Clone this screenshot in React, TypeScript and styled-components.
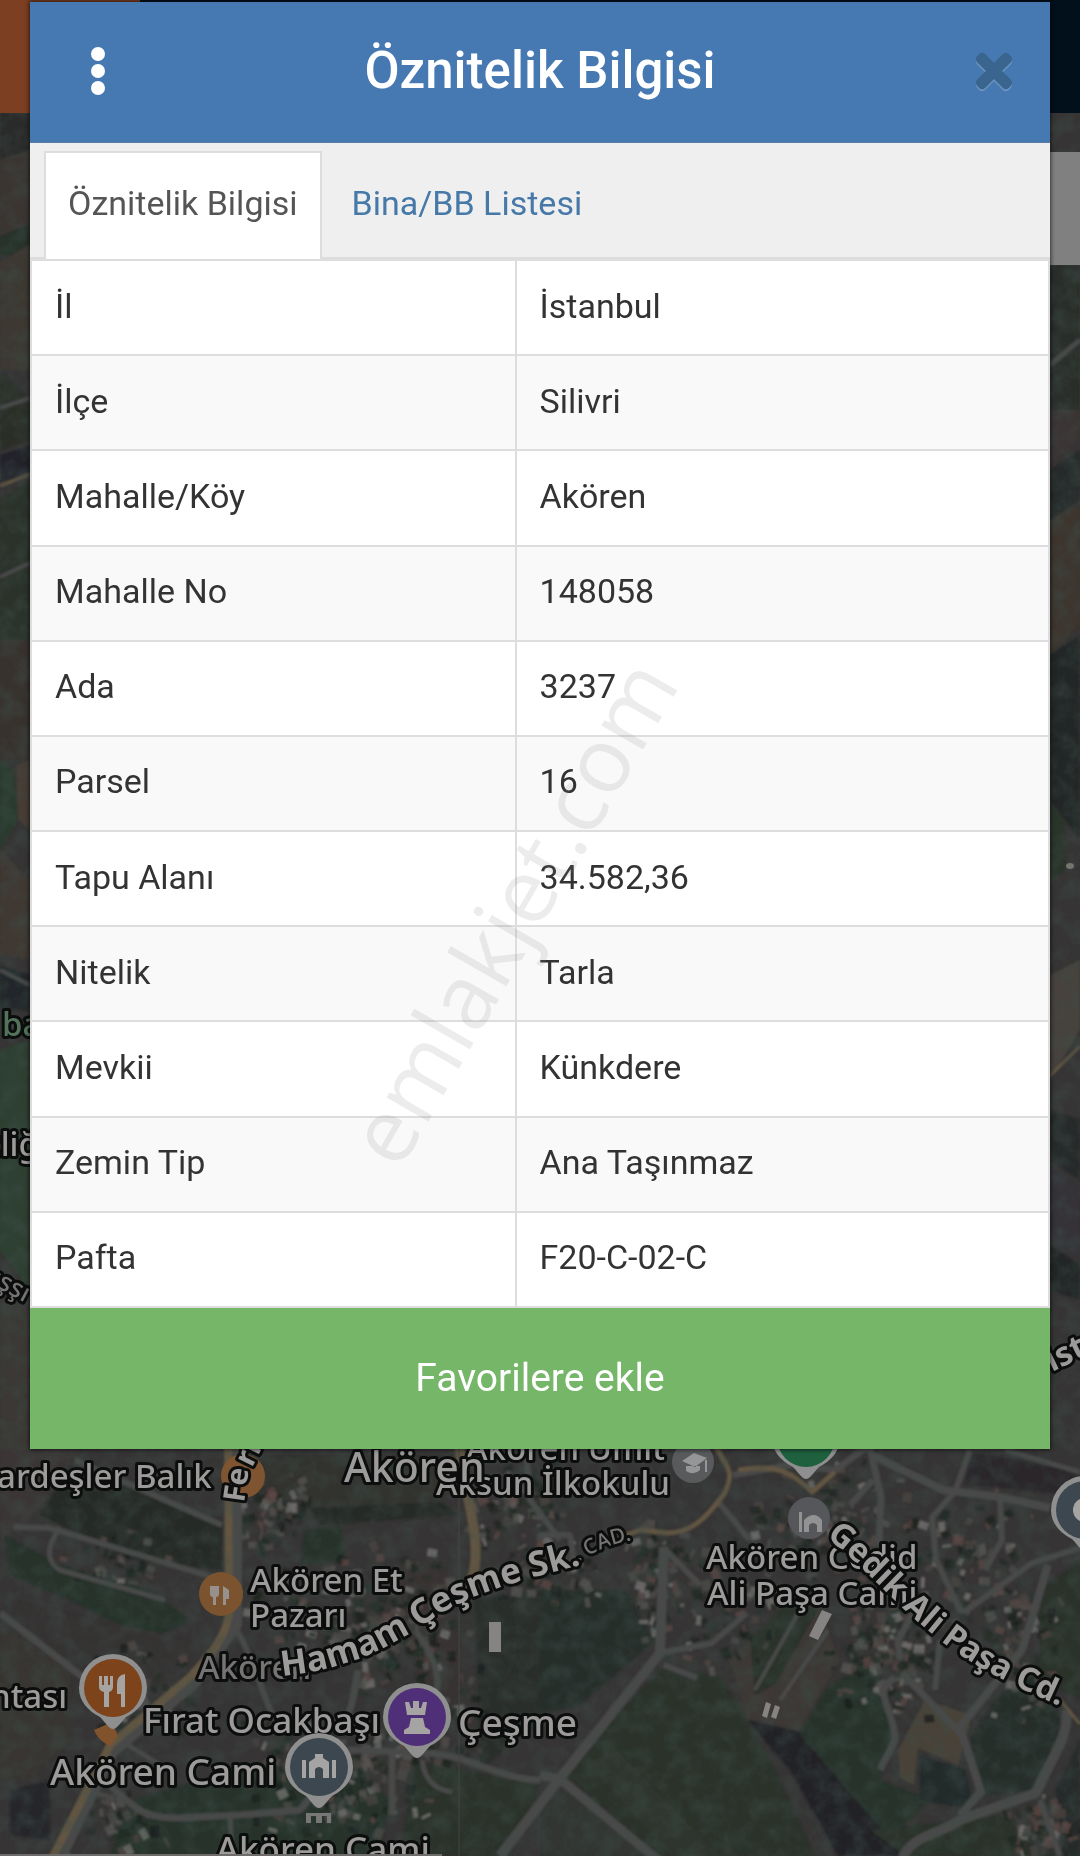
import React from "react";
import styled, { createGlobalStyle, css } from "styled-components";
import { FaTimes } from "react-icons/fa";

const GlobalStyle = createGlobalStyle`
  *, *::before, *::after { box-sizing: border-box; }
  body {
    margin: 0;
    background: #33312f;
    font-family: Roboto, "Noto Sans", sans-serif;
    color: #333;
  }
`;

const Page = styled.div`
  position: relative;
  min-height: 100vh;
  padding: 2px 30px 0;
  overflow: hidden;
`;

const Backdrop = styled.div`
  position: absolute;
  inset: 0;
  overflow: hidden;
  svg {
    display: block;
    width: 100%;
    height: 100%;
  }
`;

const Modal = styled.section`
  position: relative;
  display: flex;
  flex-direction: column;
  background: #fff;
  box-shadow: 0 0 4px 1px rgba(0, 0, 0, 0.6);
`;

const Header = styled.header`
  display: grid;
  grid-template-columns: 136px 1fr 136px;
  align-items: center;
  height: 141px;
  padding-bottom: 2px;
  background: #4678b2;
  border-bottom: 1px solid #5a7ba3;
`;

const IconButton = styled.button<{ $align: "start" | "end" }>`
  display: flex;
  justify-content: ${(p) => (p.$align === "start" ? "flex-start" : "flex-end")};
  align-items: center;
  height: 100%;
  padding: 0 39px;
  border: 0;
  background: none;
  color: #3a658f;
  cursor: pointer;
  ${(p) => p.$align === "start" && css`padding-left: 61px;`}
  svg { flex: none; }
`;

const CloseIcon = styled(FaTimes)`
  width: 34px;
  height: 50px;
  overflow: visible;
  stroke: currentColor;
  stroke-width: 24px;
  stroke-linejoin: round;
  filter: drop-shadow(0 2px 0 #6b93c0);
`;

const Title = styled.h1`
  margin: 0;
  text-align: center;
  font-size: 51px;
  line-height: 60px;
  font-weight: 500;
  color: #fff;
`;

const TabList = styled.div`
  display: flex;
  align-items: stretch;
  gap: 6px;
  height: 116px;
  padding: 8px 14px 0;
  background: #efefef;
  border-bottom: 2px solid #ddd;
`;

const Tab = styled.button<{ $active?: boolean }>`
  margin-bottom: -2px;
  padding: 0 22px 6px;
  border: 2px solid ${(p) => (p.$active ? "#ddd" : "transparent")};
  border-bottom: 0;
  background: ${(p) => (p.$active ? "#fff" : "transparent")};
  color: ${(p) => (p.$active ? "#555" : "#4678a8")};
  font: 400 34px/40px Roboto, "Noto Sans", sans-serif;
  cursor: pointer;
`;

const Table = styled.table`
  width: 100%;
  height: 1049px;
  border-collapse: collapse;
  table-layout: fixed;
  font-size: 34px;
  line-height: 40px;

  col:first-child { width: 47.6%; }
  th, td {
    padding: 22px 23px 26px;
    border: 2px solid #ddd;
    text-align: left;
    font-weight: 400;
  }
  tr:nth-child(even) { background: #f9f9f9; }
`;

const FavoriteButton = styled.button`
  height: 141px;
  padding: 0 0 2px;
  border: 0;
  background: #75b668;
  color: #fff;
  font: 400 39px/48px Roboto, "Noto Sans", sans-serif;
  cursor: pointer;
`;

const Watermark = styled.div`
  position: absolute;
  top: 50%;
  left: 50%;
  padding-bottom: 70px;
  transform: translate(-50%, -50%) rotate(-60deg);
  font: 400 90px/100px "Open Sans", "Noto Sans", sans-serif;
  color: rgba(125, 125, 125, 0.15);
  white-space: nowrap;
  pointer-events: none;
`;

const rows: [string, string][] = [
  ["İl", "İstanbul"],
  ["İlçe", "Silivri"],
  ["Mahalle/Köy", "Akören"],
  ["Mahalle No", "148058"],
  ["Ada", "3237"],
  ["Parsel", "16"],
  ["Tapu Alanı", "34.582,36"],
  ["Nitelik", "Tarla"],
  ["Mevkii", "Künkdere"],
  ["Zemin Tip", "Ana Taşınmaz"],
  ["Pafta", "F20-C-02-C"],
];

/* Land parcels: fill colour and outline. */
const parcels: [string, string][] = [
  ["#2b2c29", "0,113 30,113 30,155 0,160"],
  ["#3b3633", "0,160 30,150 30,228 0,236"],
  ["#26302a", "0,236 30,224 30,254 0,256"],
  ["#3e3833", "0,262 30,244 30,370 0,370"],
  ["#2b2d28", "0,370 30,400 30,440 0,450"],
  ["#22242a", "0,455 30,445 30,475 0,482"],
  ["#293029", "0,500 30,480 30,640 0,640"],
  ["#38332f", "0,640 30,640 30,760 0,760"],
  ["#2c3b2d", "0,760 14,770 18,820 0,850"],
  ["#463c36", "16,765 30,760 30,830 18,820"],
  ["#3f3832", "0,850 30,880 30,960 0,955"],
  ["#24262a", "0,965 30,975 30,1010 0,1010"],
  ["#2e3f31", "0,1050 30,1040 30,1290 0,1250"],
  ["#3b3835", "0,1290 30,1310 30,1449 0,1449"],
  ["#2b2f2a", "1050,265 1080,265 1080,410 1050,410"],
  ["#3b3534", "1050,410 1080,410 1080,440 1050,466"],
  ["#25292a", "1050,470 1080,450 1080,500 1050,520"],
  ["#3d352e", "1050,520 1080,505 1080,625 1050,655"],
  ["#232827", "1050,655 1080,635 1080,840 1050,800"],
  ["#2a342c", "1050,800 1064,820 1066,870 1050,880"],
  ["#47423d", "1050,975 1080,960 1080,1030 1050,1080"],
  ["#25292a", "1050,1110 1080,1120 1080,1180 1050,1160"],
  ["#363238", "1050,1165 1080,1190 1080,1260 1050,1240"],
  ["#232626", "1050,1245 1080,1265 1080,1300 1050,1290"],
  ["#3a3635", "0,1449 80,1449 30,1520 0,1540"],
  ["#272c28", "70,1465 222,1520 222,1570 130,1560 40,1515"],
  ["#26322a", "5,1535 60,1565 150,1590 190,1620 150,1640 70,1600 10,1575"],
  ["#343130", "10,1600 190,1640 170,1680 90,1700 20,1650"],
  ["#383433", "0,1625 70,1670 72,1740 30,1780 0,1780"],
  ["#33312f", "236,1455 455,1455 440,1500 330,1515 240,1490"],
  ["#25302a", "305,1530 340,1525 345,1560 300,1565"],
  ["#282b27", "310,1508 440,1502 460,1515 320,1525"],
  ["#373331", "395,1565 450,1570 465,1700 420,1690"],
  ["#263029", "240,1770 340,1760 390,1800 380,1856 110,1856 130,1800"],
  ["#25262a", "10,1790 50,1780 50,1840 10,1835"],
  ["#293029", "415,1760 540,1785 510,1856 400,1856"],
  ["#272f2a", "540,1590 625,1590 655,1640 580,1705 540,1715"],
  ["#292e29", "475,1600 540,1590 540,1720 480,1770"],
  ["#293029", "660,1670 720,1675 770,1760 815,1856 660,1856 565,1775 620,1710"],
  ["#323430", "565,1785 650,1856 540,1856 540,1810"],
  ["#2e342d", "612,1745 720,1856 670,1856 590,1765"],
  ["#232327", "747,1720 800,1732 905,1856 838,1856 790,1770"],
  ["#3d3935", "820,1610 840,1660 798,1730 747,1718 730,1660 770,1620"],
  ["#293029", "750,1640 790,1600 818,1610 775,1685 755,1695"],
  ["#28302a", "825,1690 870,1660 895,1730 880,1780 930,1800 890,1840 800,1735"],
  ["#4a4239", "925,1700 972,1715 958,1765 918,1748 914,1785 900,1778 898,1750"],
  ["#242a29", "920,1755 965,1770 975,1810 920,1800"],
  ["#282f2a", "995,1700 1050,1650 1062,1735 1035,1790 985,1795 970,1740"],
  ["#2a282c", "970,1452 1080,1470 1080,1495 965,1485"],
  ["#293029", "1040,1590 1080,1560 1080,1700 1040,1680"],
  ["#282c2b", "1055,1790 1080,1740 1080,1856 1065,1856"],
  ["#293029", "870,1830 1010,1815 1035,1856 905,1856"],
];

const greyRoads: [number, string][] = [
  [7, "M0 1613 L80 1675 L110 1690"],
  [6, "M14 1527 L50 1528 L222 1580"],
  [5, "M60 1527 C48 1545 44 1560 60 1570 L165 1600"],
  [6, "M75 1460 L165 1500 L222 1525"],
  [6, "M235 1627 C255 1660 260 1690 275 1720"],
  [6, "M415 1630 C430 1650 440 1670 437 1690"],
  [7, "M358 1670 C355 1690 352 1710 345 1720 M392 1750 L392 1815"],
  [7, "M110 1785 C140 1815 150 1818 180 1818 L240 1815 L300 1810 L350 1750 L427 1753 C470 1755 500 1780 540 1780"],
  [5, "M422 1760 C425 1785 440 1790 452 1792 M230 1815 L232 1856 M120 1740 L160 1765"],
  [10, "M500 1856 L561 1777 L609 1717 L660 1653 L664 1547"],
  [9, "M561 1780 L660 1862 M540 1775 L565 1780"],
  [6, "M660 1653 L712 1643 L747 1613 M664 1665 L697 1678 M664 1548 L700 1585"],
  [6, "M525 1440 L530 1500 L560 1540 M540 1535 L570 1535 L575 1570"],
  [6, "M716 1500 C735 1520 740 1530 750 1540"],
  [7, "M733 1475 L790 1465 L835 1470 L870 1445"],
  [7, "M870 1448 L881 1497 L879 1545 M873 1480 L850 1505"],
  [8, "M872 1455 L943 1490 L1000 1497 L1050 1508"],
  [6, "M970 1450 L955 1492 L932 1517 L936 1560 L960 1610 L970 1612"],
  [6, "M1000 1497 L1002 1540 L985 1570 M1080 1548 L1032 1563 L967 1610"],
  [5, "M1005 1450 L1080 1472"],
  [8, "M1048 1565 L1022 1650 L960 1727 L981 1792 L960 1815"],
  [7, "M902 1673 L960 1733 M900 1660 L898 1640 L915 1610"],
  [7, "M895 1678 C870 1690 895 1710 895 1740 L880 1770"],
  [10, "M902 1860 C910 1835 940 1835 960 1820 L1036 1793 C1050 1760 1068 1740 1067 1710"],
  [6, "M1040 1800 L1060 1856 M940 1640 L935 1690"],
  [4, "M755 1690 L800 1610 M780 1700 L828 1630"],
  [4, "M0 408 L30 398 M0 577 L30 563 M0 970 L30 985"],
  [5, "M1050 365 L1080 340"],
];

const tanRoads: [number, string][] = [
  [8, "M228 1445 L229 1610 C228 1640 200 1665 190 1677 L110 1745 L50 1862"],
  [10, "M459 1445 C466 1500 482 1540 473 1575 L460 1600"],
  [5, "M716 1445 C722 1465 738 1468 724 1494 C705 1520 690 1533 667 1533 L640 1530 L600 1545"],
  [5, "M738 1470 C780 1463 795 1475 812 1492 L835 1472"],
  [3, "M1060 1700 L1080 1724"],
  [3, "M1050 1076 L1080 1046 M0 486 L30 474"],
];

/* Neighbourhoods: centre x, y, spread x, y and number of roofs. */
const clusters: [number, number, number, number, number][] = [
  [360, 1620, 130, 80, 230],
  [330, 1770, 100, 70, 230],
  [270, 1510, 40, 45, 60],
  [440, 1720, 60, 70, 70],
  [510, 1500, 60, 50, 80],
  [540, 1570, 70, 40, 50],
  [650, 1580, 30, 70, 70],
  [720, 1600, 70, 80, 80],
  [880, 1650, 60, 70, 150],
  [820, 1520, 90, 70, 110],
  [960, 1560, 80, 80, 100],
  [1020, 1640, 40, 90, 80],
  [1040, 1830, 40, 40, 80],
  [140, 1690, 60, 50, 50],
  [110, 1820, 60, 40, 50],
  [120, 1560, 70, 35, 30],
];

function buildRoofs() {
  let seed = 71;
  const next = () => {
    seed = (seed * 16807) % 2147483647;
    return seed / 2147483647;
  };
  const tones = ["#5a5654", "#5d4744", "#1b201d", "#1e2720", "#504c4a", "#222a24", "#7c7a78", "#4e4340", "#1c221d", "#2a332b"];
  return clusters.flatMap(([cx, cy, sx, sy, count]) =>
    Array.from({ length: count }, () => ({
      x: Math.round(cx + (next() + next() - 1) * sx),
      y: Math.round(cy + (next() + next() - 1) * sy),
      w: Math.round(3 + next() * 8),
      h: Math.round(3 + next() * 8),
      a: Math.round(next() * 60 - 30),
      fill: tones[Math.floor(next() * tones.length)],
    }))
  );
}

const roofs = buildRoofs();

const MapLabel = styled.text<{ $size?: number; $dim?: boolean; $strong?: boolean; $park?: boolean }>`
  font-family: "Noto Sans", Roboto, sans-serif;
  font-size: ${(p) => p.$size ?? 33}px;
  font-weight: ${(p) => (p.$strong ? 700 : 500)};
  fill: ${(p) => (p.$park ? "#55735b" : p.$dim ? "#767473" : "#9c9b9a")};
  stroke: #0c0d0d;
  stroke-width: 6px;
  stroke-linejoin: round;
  paint-order: stroke;
`;

function Pin({ x, y, color, children }: { x: number; y: number; color: string; children?: React.ReactNode }) {
  return (
    <g transform={`translate(${x} ${y})`}>
      <path d="M0 41 C-4 41 -7 35 -13 29 C-25 23 -34 13 -34 0 A34 34 0 0 1 34 0 C34 13 25 23 13 29 C7 35 4 41 0 41 Z" fill="#8f8f8f" />
      <circle r="29" fill={color} />
      <g fill="#a5a4a3">{children}</g>
    </g>
  );
}

function SatelliteMap() {
  return (
    <svg viewBox="0 0 1080 1856" preserveAspectRatio="xMidYMin slice" aria-hidden="true">
      <defs>
        <filter id="soft" x="0" y="0" width="100%" height="100%">
          <feGaussianBlur stdDeviation="1.2" />
        </filter>
        <filter id="terrain" x="0" y="0" width="100%" height="100%">
          <feTurbulence type="fractalNoise" baseFrequency="0.06" numOctaves="4" seed="8" />
          <feColorMatrix values="0 0 0 0 0.05  0 0 0 0 0.08  0 0 0 0 0.07  1.8 0 0 0 -0.65" />
        </filter>
        <path id="hamam" d="M282 1676 C360 1668 400 1640 440 1614 C480 1590 530 1578 600 1560" />
        <path id="gedik" d="M826 1537 C860 1562 900 1610 940 1640 C980 1672 1020 1688 1090 1720" />
        <path id="cad" d="M578 1562 C600 1548 620 1540 650 1538" />
      </defs>
      <rect width="1080" height="1856" fill="#363434" />
      <g filter="url(#soft)">
        {parcels.map(([fill, points]) => (
          <polygon key={points} points={points} fill={fill} />
        ))}
        {roofs.map((r, i) => (
          <rect key={i} x={r.x} y={r.y} width={r.w} height={r.h} fill={r.fill} opacity="0.75" transform={`rotate(${r.a} ${r.x} ${r.y})`} />
        ))}
        <g fill="none" stroke="#4a4948" strokeLinejoin="round">
          <path d="M236 1445 L236 1625 L195 1682 L112 1752 L58 1862" strokeWidth="12" />
          {greyRoads.map(([w, d]) => (
            <path key={d} d={d} strokeWidth={w} />
          ))}
        </g>
        <g fill="none" stroke="#635743" strokeLinejoin="round">
          {tanRoads.map(([w, d]) => (
            <path key={d} d={d} strokeWidth={w} />
          ))}
        </g>
      </g>
      <rect width="1080" height="1856" filter="url(#terrain)" opacity="0.5" />
      <path d="M459 1449 V1856" stroke="#444" strokeWidth="1" />
      <g fill="#858483">
        <path d="M489 1622 h12 v30 h-12 z" />
        <path d="M822 1610 l10 4 -14 26 -9 -4 z" />
        <path d="M766 1702 l5 2 -4 14 -5 -2 z M775 1705 l5 2 -4 12 -5 -2 z" />
      </g>
      <ellipse cx="1070" cy="866" rx="4" ry="3" fill="#74746f" />

      <rect width="140" height="113" fill="#7c3f22" />
      <rect x="140" width="940" height="113" fill="#02101c" />
      <rect x="1040" y="152" width="40" height="113" fill="#808080" />

      <circle cx="243" cy="1476" r="22" fill="#7f5430" />
      <circle cx="221" cy="1594" r="22" fill="#7b532f" />
      <path d="M210 1586 v8 q0 3 3 3 v8 h3 v-8 q3 0 3 -3 v-8 z M223 1586 v19 h3 v-6 h3 v-9 z" fill="#96918c" />
      <path d="M94 1730 C98 1740 106 1744 110 1746 L118 1736 L112 1722 Z" fill="#80532d" />
      <circle cx="693" cy="1462" r="21" fill="#595a5c" />
      <path d="M682 1461 l12 -8 13 5 -12 9 z M686 1466 v5 q8 5 14 -1 v-4 z M705 1460 h2 v12 h-2 z" fill="#959697" />
      <circle cx="809" cy="1518" r="21" fill="#55575a" />
      <path d="M799 1512 h3 v20 h-3 z M804 1532 v-12 q10 -10 18 0 v12 h-5 v-7 q-4 -4 -8 0 v7 z" fill="#929292" />

      <MapLabel x="-3" y="1488">ardeşler Balık</MapLabel>
      <MapLabel transform="translate(244 1503) rotate(-82)" $strong $size={30}>Fe</MapLabel>
      <MapLabel transform="translate(252 1468) rotate(-64)" $strong $size={30}>rman</MapLabel>
      <MapLabel x="436" y="1495">Aksun İlkokulu</MapLabel>
      <MapLabel x="466" y="1460">Akören Ümit</MapLabel>
      <MapLabel x="344" y="1482" $size={41}>Akören</MapLabel>
      <MapLabel x="250" y="1592">Akören Et</MapLabel>
      <MapLabel x="250" y="1627">Pazarı</MapLabel>
      <MapLabel x="198" y="1679" $dim>Akören</MapLabel>
      <MapLabel x="706" y="1569">Akören Cedid</MapLabel>
      <MapLabel x="707" y="1605">Ali Paşa Cami</MapLabel>
      <MapLabel $size={21} $dim><textPath href="#cad">. CAD.</textPath></MapLabel>
      <MapLabel $strong $size={35}><textPath href="#hamam">Hamam Çeşme Sk.</textPath></MapLabel>
      <MapLabel $strong><textPath href="#gedik">Gedik Ali Paşa Cd.</textPath></MapLabel>
      <MapLabel x="-10" y="1708">ntası</MapLabel>
      <MapLabel x="143" y="1733" $size={35}>Fırat Ocakbaşı</MapLabel>
      <MapLabel x="458" y="1736" $size={37}>Çeşme</MapLabel>
      <MapLabel x="50" y="1785" $size={37}>Akören Cami</MapLabel>
      <MapLabel x="216" y="1862" $size={35}>Akören Cami</MapLabel>
      <MapLabel x="2" y="1036" $park>bağ</MapLabel>
      <MapLabel x="-12" y="1156">tliği</MapLabel>
      <MapLabel transform="translate(-10 1284) rotate(28)" $size={26} $dim>ışşı</MapLabel>
      <MapLabel transform="translate(1052 1372) rotate(-26)" $strong>ist</MapLabel>

      <Pin x={113} y={1688} color="#7d431a">
        <path d="M-14 -12 h3 v9 h2 v-9 h4 v9 h2 v-9 h3 v11 q0 4 -4 5 v15 h-5 v-15 q-5 -1 -5 -5 z M4 -4 q0 -9 8 -10 v33 h-4 v-13 h-4 z" />
      </Pin>
      <Pin x={417} y={1717} color="#502f79">
        <path d="M-12 -15 h4 l2 6 h2 v-7 h6 v7 h2 l2 -6 h4 l-2 13 h-18 z M-6 1 h12 l2 9 5 3 v4 h-26 v-4 l5 -3 z" />
      </Pin>
      <Pin x={319} y={1767} color="#3c4750">
        <path d="M-17 -7 h4 v18 h-4 z M13 -7 h4 v18 h-4 z M-10 11 v-16 l6 -4 v-4 h8 v4 l6 4 v16 h-6 v-9 q-4 -4 -8 0 v9 z" />
      </Pin>
      <path d="M306 1813 h25 v10 h-4 v-7 h-5 v7 h-6 v-7 h-5 v7 h-5 z" fill="#777" />
      <Pin x={806} y={1438} color="#1f603e" />
      <Pin x={1085} y={1510} color="#3c4750">
        <circle r="12" />
      </Pin>
      <rect y="1854" width="442" height="2" fill="#6d6c6b" />
    </svg>
  );
}

export default function App() {
  return (
    <>
      <GlobalStyle />
      <Page>
        <Backdrop>
          <SatelliteMap />
        </Backdrop>
        <Modal role="dialog" aria-labelledby="dialog-title">
          <Header>
            <IconButton $align="start" aria-label="Menü">
              <svg width="14" height="48" viewBox="0 0 14 48" fill="#fff">
                <circle cx="7" cy="7" r="7" />
                <circle cx="7" cy="24" r="7" />
                <circle cx="7" cy="41" r="7" />
              </svg>
            </IconButton>
            <Title id="dialog-title">Öznitelik Bilgisi</Title>
            <IconButton $align="end" aria-label="Kapat">
              <CloseIcon />
            </IconButton>
          </Header>
          <TabList role="tablist">
            <Tab role="tab" aria-selected="true" $active>Öznitelik Bilgisi</Tab>
            <Tab role="tab" aria-selected="false">Bina/BB Listesi</Tab>
          </TabList>
          <Table>
            <colgroup>
              <col />
              <col />
            </colgroup>
            <tbody>
              {rows.map(([label, value]) => (
                <tr key={label}>
                  <th scope="row">{label}</th>
                  <td>{value}</td>
                </tr>
              ))}
            </tbody>
          </Table>
          <FavoriteButton>Favorilere ekle</FavoriteButton>
        </Modal>
        <Watermark>emlakjet.com</Watermark>
      </Page>
    </>
  );
}
